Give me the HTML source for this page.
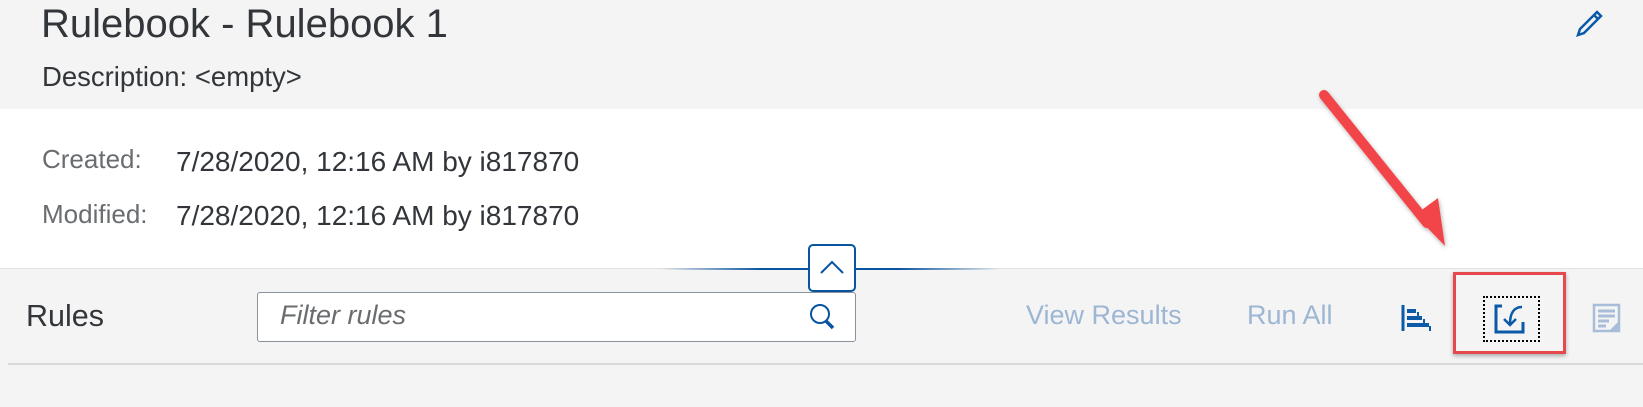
<!DOCTYPE html>
<html><head><style>
body{margin:0;width:1643px;height:407px;position:relative;overflow:hidden;background:#f4f4f4;font-family:"Liberation Sans",sans-serif;color:#32363a}
.a{position:absolute;white-space:nowrap;line-height:1.15}
</style></head><body>
<div class="a" style="left:0;top:0;width:1643px;height:109px;background:#f4f4f4"></div>
<div class="a" style="left:0;top:109px;width:1643px;height:159px;background:#fff;border-bottom:1px solid #e2e2e2"></div>
<div class="a" style="left:41px;top:1px;font-size:40px">Rulebook - Rulebook 1</div>
<div class="a" style="left:42px;top:61px;font-size:27.5px">Description: &lt;empty&gt;</div>
<div class="a" style="left:42px;top:145px;font-size:26px;color:#6a6d70">Created:</div>
<div class="a" style="left:176px;top:146px;font-size:28px">7/28/2020, 12:16 AM by i817870</div>
<div class="a" style="left:42px;top:200px;font-size:26px;color:#6a6d70">Modified:</div>
<div class="a" style="left:176px;top:200px;font-size:28px">7/28/2020, 12:16 AM by i817870</div>
<svg class="a" style="left:1570px;top:6px" width="36" height="34" viewBox="0 0 36 34"><path d="M8 29 L10 23 L27 6 L31 10 L14 27 Z M24 9 L28 13" fill="none" stroke="#0a5aa8" stroke-width="2.5"/></svg>
<div class="a" style="left:660px;top:268px;width:340px;height:2px;background:linear-gradient(90deg,rgba(8,84,160,0),#0854a0 30%,#0854a0 70%,rgba(8,84,160,0))"></div>
<div class="a" style="left:808px;top:244px;width:44px;height:44px;border:2px solid #0854a0;border-radius:5px;background:#fff"></div>
<svg class="a" style="left:808px;top:244px" width="48" height="48"><path d="M13 29 L24 18 L35 29" fill="none" stroke="#0854a0" stroke-width="2"/></svg>
<div class="a" style="left:26px;top:299px;font-size:30.5px">Rules</div>
<div class="a" style="left:257px;top:292px;width:597px;height:48px;border:1px solid #89919a;border-radius:3px;background:#fff"></div>
<div class="a" style="left:280px;top:300px;font-size:27px;font-style:italic;color:#6a6d70">Filter rules</div>
<svg class="a" style="left:805px;top:300px" width="36" height="36"><circle cx="15" cy="14" r="9" fill="none" stroke="#0854a0" stroke-width="2"/><path d="M21 21 L28 28" stroke="#0854a0" stroke-width="3.5"/></svg>
<div class="a" style="left:1026px;top:300px;font-size:27px;color:#9cb6d4">View Results</div>
<div class="a" style="left:1247px;top:300px;font-size:27px;color:#9cb6d4">Run All</div>
<svg class="a" style="left:1400px;top:302px" width="34" height="32"><path d="M3 3 V29" stroke="#0a5aa8" stroke-width="3"/><rect x="7" y="7" width="9" height="4" fill="#0a5aa8"/><rect x="7" y="14" width="15" height="4" fill="#0a5aa8"/><rect x="7" y="21" width="22" height="4" fill="#0a5aa8"/><path d="M18 10 V17 M24 17 V24 M30 24 V29" stroke="#0a5aa8" stroke-width="2"/></svg>
<div class="a" style="left:1453px;top:272px;width:107px;height:76px;border:3px solid #e5484d;box-shadow:0 2px 4px rgba(0,0,0,.3)"></div>
<div class="a" style="left:1483px;top:296px;width:53px;height:42px;border:2px dotted #000"></div>
<svg class="a" style="left:1490px;top:298px" width="42" height="40"><path d="M12 8 H6 V34 H33 V24" fill="none" stroke="#0a5aa8" stroke-width="3"/><path d="M32 9 C24 9 20 15 20 26 M14 21 L20 27 L26 21" fill="none" stroke="#0a5aa8" stroke-width="2.5"/></svg>
<svg class="a" style="left:1592px;top:303px" width="32" height="30"><rect x="2" y="2" width="25" height="26" fill="none" stroke="#a8bdd8" stroke-width="2.5"/><path d="M6 8 H23 M6 13 H23 M6 18 H17 M6 23 H14" stroke="#a8bdd8" stroke-width="3"/><path d="M17 28 L27 28 L27 18 Z" fill="#a8bdd8"/></svg>
<div class="a" style="left:8px;top:363px;width:1635px;height:2px;background:#d9d9d9"></div>
<svg class="a" style="left:0;top:0" width="1643" height="407"><defs><filter id="s"><feDropShadow dx="1" dy="2" stdDeviation="2" flood-opacity=".3"/></filter></defs><g filter="url(#s)"><path d="M1324 95 L1427 223" stroke="#f2444a" stroke-width="10" stroke-linecap="round"/><path d="M1415 215 L1438 198 L1445 246 Z" fill="#f2444a"/></g></svg>
</body></html>
